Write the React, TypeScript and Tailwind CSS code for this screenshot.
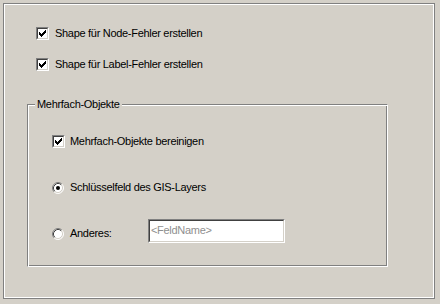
import React from "react";

const CHECK =
  "M6 0h1v1h-1z M5 1h2v1h-2z M0 2h1v1h-1z M4 2h3v1h-3z M0 3h2v1h-2z M3 3h3v1h-3z M0 4h5v1h-5z M1 5h3v1h-3z M2 6h1v1h-1z";

function CheckBox() {
  return (
    <div className="w-[13px] h-[13px] flex shrink-0 border border-t-[#808080] border-l-[#808080] border-r-white border-b-white">
      <div className="flex-1 flex items-center justify-center bg-white border border-t-[#404040] border-l-[#404040] border-r-[#d4d0c8] border-b-[#d4d0c8]">
        <svg width="7" height="7" viewBox="0 0 7 7" shapeRendering="crispEdges">
          <path d={CHECK} fill="#000" />
        </svg>
      </div>
    </div>
  );
}

function Radio({ checked }: { checked?: boolean }) {
  return (
    <svg width="12" height="12" viewBox="0 0 12 12" className="shrink-0">
      <circle cx="6" cy="6" r="5" fill="#fff" />
      <path d="M2.11 9.89 A5.5 5.5 0 0 1 9.89 2.11" stroke="#808080" fill="none" strokeWidth="1" />
      <path d="M9.89 2.11 A5.5 5.5 0 0 1 2.11 9.89" stroke="#ffffff" fill="none" strokeWidth="1" />
      <path d="M2.82 9.18 A4.5 4.5 0 0 1 9.18 2.82" stroke="#404040" fill="none" strokeWidth="1" />
      <path d="M9.18 2.82 A4.5 4.5 0 0 1 2.82 9.18" stroke="#d4d0c8" fill="none" strokeWidth="1" />
      {checked && <circle cx="6" cy="6" r="2" fill="#000" />}
    </svg>
  );
}

export default function App() {
  return (
    <div className="w-[440px] h-[304px] bg-[#d4d0c8] p-[3px] font-['Liberation_Sans',Arial,sans-serif] text-[11px] leading-[13px] tracking-[-0.3px] text-black">
      <div className="w-[432px] h-[296px] border border-[#808080] shadow-[inset_0_0_0_1px_#fff] pt-[23px] flex flex-col">
        <div className="flex items-center h-[13px] ml-[32px] gap-[6px]">
          <CheckBox />
          <span>Shape für Node-Fehler erstellen</span>
        </div>
        <div className="flex items-center h-[13px] ml-[32px] mt-[18px] gap-[6px]">
          <CheckBox />
          <span>Shape für Label-Fehler erstellen</span>
        </div>

        <div className="relative ml-[23px] mt-[33px] w-[361px] h-[163px] border border-t-[#808080] border-l-[#808080] border-r-white border-b-white shadow-[inset_1px_1px_0_#fff,inset_-1px_-1px_0_#808080] pt-[30px] flex flex-col">
          <span className="absolute left-[7px] top-[-7px] px-[2px] bg-[#d4d0c8]">Mehrfach-Objekte</span>

          <div className="flex items-center h-[13px] ml-[24px] gap-[5px]">
            <CheckBox />
            <span>Mehrfach-Objekte bereinigen</span>
          </div>

          <div className="flex items-center h-[13px] ml-[24px] mt-[33px] gap-[6px]">
            <Radio checked />
            <span>Schlüsselfeld des GIS-Layers</span>
          </div>

          <div className="flex items-start ml-[24px] mt-[25px]">
            <div className="flex items-center h-[13px] mt-[8px] w-[96px] gap-[6px]">
              <Radio />
              <span>Anderes:</span>
            </div>
            <div className="w-[137px] h-[24px] flex border border-t-[#808080] border-l-[#808080] border-r-white border-b-white">
              <div className="flex-1 bg-white border border-t-[#404040] border-l-[#404040] border-r-[#d4d0c8] border-b-[#d4d0c8] pl-[1px] pt-[3px] text-[#8f8f8f]">
                &lt;FeldName&gt;
              </div>
            </div>
          </div>
        </div>
      </div>
    </div>
  );
}
